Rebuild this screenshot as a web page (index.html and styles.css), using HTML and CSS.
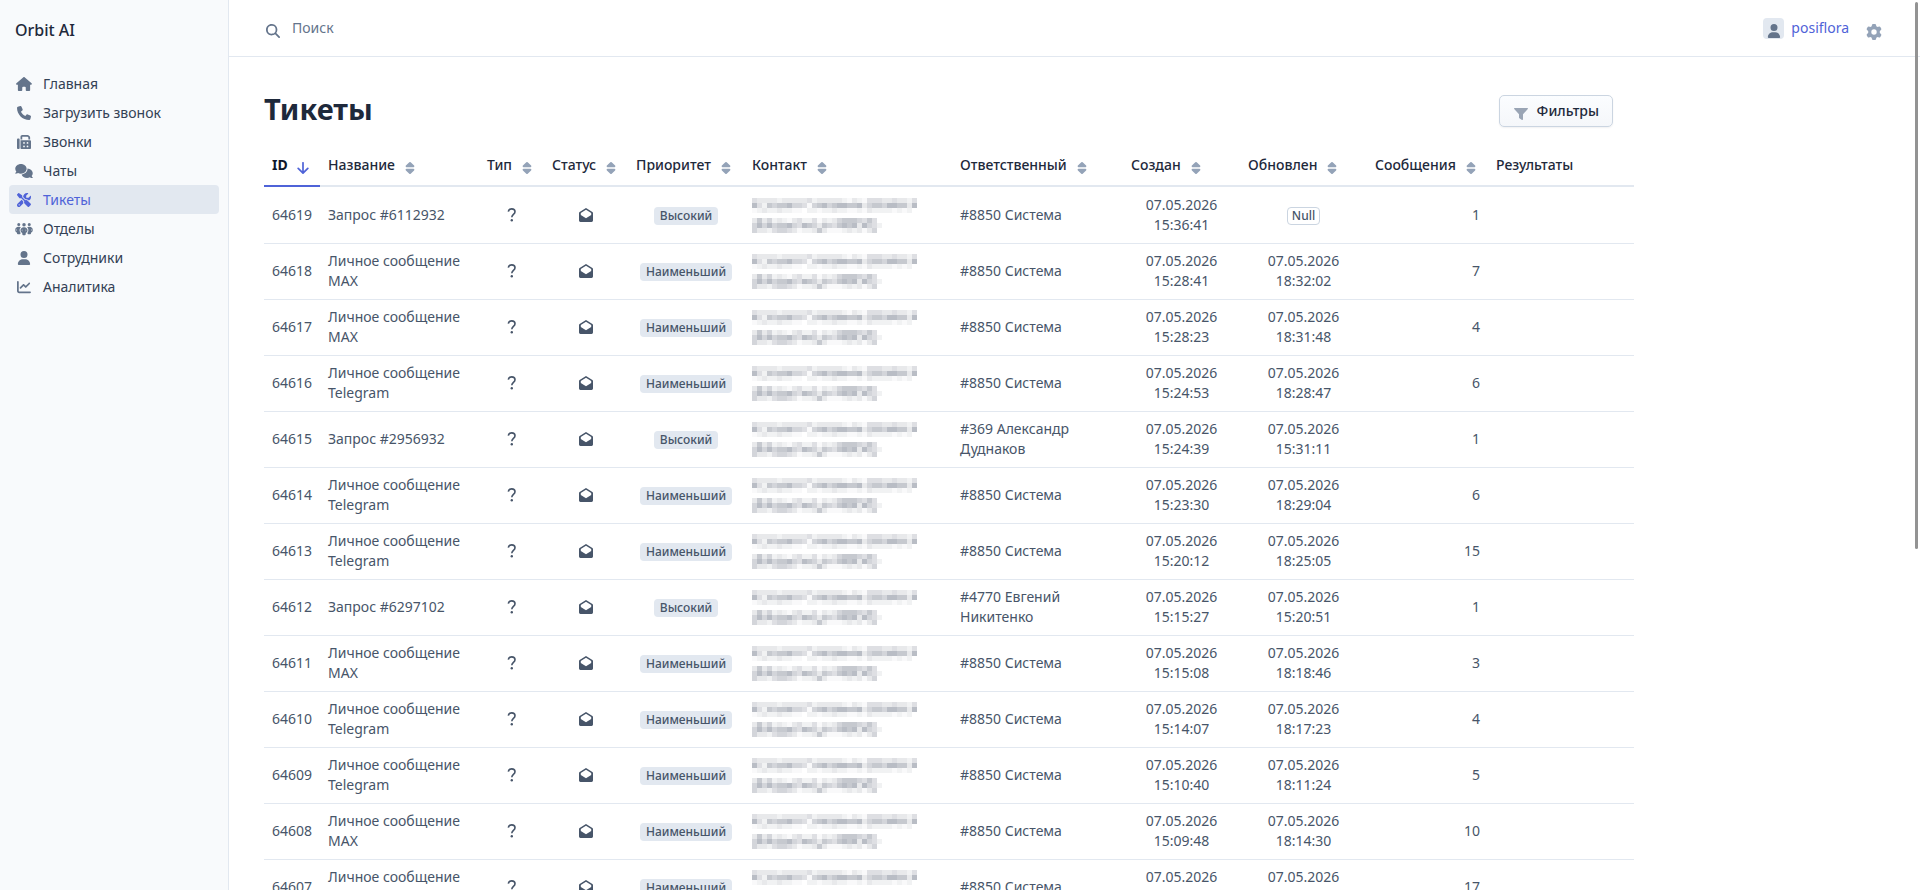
FILE: index.html
```html
<!DOCTYPE html>
<html lang="ru">
<head>
<meta charset="utf-8">
<title>Тикеты — Orbit AI</title>
<link rel="stylesheet" href="styles.css">
</head>
<body>
<svg class="sprite" aria-hidden="true">
  <symbol id="i-sort" viewBox="0 0 10 12"><path d="M5 0a1 1 0 0 1 .7.300l3.400 3.300c.6.6.2 1.600-.6 1.600H1.500c-.8 0-1.200-1-.6-1.600L4.300.300A1 1 0 0 1 5 0zM5 12a1 1 0 0 0 .7-.300l3.400-3.300c.6-.6.2-1.600-.6-1.600H1.500c-.8 0-1.200 1-.6 1.600l3.400 3.300a1 1 0 0 0 .7.300z"/></symbol>
  <symbol id="i-mail" viewBox="0 0 14 14"><path fill-rule="evenodd" d="M7 0 13.400 4Q14 4.400 14 5.100V12.600Q14 14 12.600 14H1.400Q0 14 0 12.600V5.100Q0 4.400.6 4zM7 1.700 1.800 5.100V6.900L7 10.200 12.200 6.900V5.100z"/></symbol>
  <symbol id="i-help" viewBox="0 0 10 14"><path fill="none" stroke="currentColor" stroke-width="1.600" d="M1.300 3.700C1.500 1.900 2.900.9 4.700.9c2 0 3.300 1.100 3.300 2.900 0 2.600-3.200 2.700-3.200 5.500"/><circle cx="4.800" cy="12.300" r="1.200"/></symbol>
  <symbol id="i-user" viewBox="0 0 448 512"><path d="M224 256A128 128 0 1 0 224 0a128 128 0 1 0 0 256zm-45.700 48C79.800 304 0 383.800 0 482.300C0 498.700 13.300 512 29.700 512H418.300c16.400 0 29.700-13.300 29.700-29.700C448 383.800 368.200 304 269.700 304H178.300z"/></symbol>
</svg>

<div class="layout">
  <aside class="sidebar">
    <a class="brand" href="#">Orbit AI</a>
    <nav class="menu" aria-label="Главное меню">
      <a href="#"><svg class="icon" viewBox="0 0 576 512"><path d="M575.800 255.500c0 18-15 32.100-32 32.100l-32 0 .7 160.200c0 2.700-.2 5.400-.5 8.100l0 16.200c0 22.100-17.900 40-40 40l-16 0c-1.100 0-2.200 0-3.300-.1c-1.400 .1-2.800 .1-4.200 .1L416 512l-24 0c-22.100 0-40-17.900-40-40l0-24 0-64c0-17.700-14.300-32-32-32l-64 0c-17.700 0-32 14.300-32 32l0 64 0 24c0 22.100-17.900 40-40 40l-24 0-31.900 0c-1.500 0-3-.1-4.500-.2c-1.200 .1-2.400 .2-3.600 .2l-16 0c-22.100 0-40-17.900-40-40l0-112c0-.9 0-1.900 .1-2.800l0-69.700-32 0c-18 0-32-14-32-32.100c0-9 3-17 10-24L266.400 8c7-7 15-8 22-8s15 2 21 7L564.800 231.500c8 7 12 15 11 24z"/></svg>Главная</a>
      <a href="#"><svg class="icon" viewBox="0 0 512 512"><path d="M164.900 24.600c-7.700-18.600-28-28.500-47.400-23.200l-88 24C12.100 30.200 0 46 0 64C0 311.400 200.600 512 448 512c18 0 33.800-12.100 38.600-29.500l24-88c5.300-19.400-4.600-39.700-23.200-47.400l-96-40c-16.300-6.800-35.200-2.100-46.300 11.600L304.700 368C234.300 334.700 177.300 277.700 144 207.300L193.300 167c13.700-11.200 18.400-30 11.600-46.300l-40-96z"/></svg>Загрузить звонок</a>
      <a href="#"><svg class="icon" viewBox="0 0 512 512"><path d="M128 64v96h64V64H386.700L416 93.300V160h64V93.300c0-17-6.700-33.300-18.700-45.300L432 18.700C420 6.700 403.700 0 386.700 0H192c-35.300 0-64 28.700-64 64zM0 160V480c0 17.700 14.300 32 32 32H64c17.700 0 32-14.300 32-32V160c0-17.700-14.300-32-32-32H32c-17.700 0-32 14.300-32 32zm480 32H128V480c0 17.700 14.300 32 32 32H480c17.700 0 32-14.300 32-32V224c0-17.700-14.300-32-32-32zM256 256a32 32 0 1 1 0 64 32 32 0 1 1 0-64zm96 32a32 32 0 1 1 64 0 32 32 0 1 1 -64 0zm32 96a32 32 0 1 1 0 64 32 32 0 1 1 0-64zM224 416a32 32 0 1 1 64 0 32 32 0 1 1 -64 0z" fill-rule="evenodd"/></svg>Звонки</a>
      <a href="#"><svg class="icon" viewBox="0 0 640 512"><path d="M208 352c114.900 0 208-78.800 208-176S322.900 0 208 0S0 78.800 0 176c0 38.600 14.700 74.300 39.600 103.400c-3.500 9.400-8.700 17.700-14.200 24.700c-4.800 6.200-9.700 11-13.300 14.300c-1.800 1.600-3.300 2.900-4.300 3.700c-.5 .4-.9 .7-1.100 .8l-.2 .2C1 327.200-1.400 334.400 .8 340.900S9.100 352 16 352c21.800 0 43.800-5.600 62.100-12.500c9.200-3.500 17.800-7.400 25.200-11.400C134.100 343.300 169.800 352 208 352zM448 176c0 112.300-99.100 196.900-216.500 207C255.800 457.400 336.400 512 432 512c38.200 0 73.900-8.700 104.700-23.900c7.500 4 16 7.900 25.200 11.400c18.300 6.900 40.300 12.500 62.100 12.500c6.900 0 13.100-4.500 15.200-11.100c2.100-6.600-.2-13.800-5.800-17.900l-.2-.2c-.2-.2-.6-.4-1.100-.8c-1-.8-2.500-2-4.300-3.700c-3.600-3.300-8.500-8.100-13.300-14.300c-5.500-7-10.700-15.400-14.200-24.700c24.900-29 39.600-64.700 39.600-103.400c0-92.800-84.900-168.900-192.600-175.500c.4 5.100 .6 10.300 .6 15.500z"/></svg>Чаты</a>
      <a class="active" href="#" aria-current="page"><svg class="icon" viewBox="0 0 512 512"><path d="M78.600 5C69.100-2.400 55.600-1.500 47 7L7 47c-8.500 8.500-9.400 22-2.100 31.600l80 104c4.500 5.900 11.600 9.400 19 9.400h54.100l109 109c-14.700 29-10 65.400 14.300 89.600l112 112c12.500 12.500 32.800 12.500 45.300 0l64-64c12.500-12.500 12.500-32.800 0-45.300l-112-112c-24.200-24.200-60.600-29-89.600-14.300l-109-109V104c0-7.500-3.500-14.500-9.400-19L78.600 5zM19.900 396.100C7.200 408.800 0 426.100 0 444.100C0 481.600 30.400 512 67.900 512c18 0 35.300-7.200 48-19.900L233.700 374.300c-7.800-20.900-9-43.600-3.600-65.100l-61.700-61.700L19.900 396.100zM512 144c0-10.500-1.100-20.700-3.200-30.500c-2.400-11.200-16.100-14.100-24.200-6l-63.900 63.900c-3 3-7.100 4.700-11.300 4.700H352c-8.800 0-16-7.200-16-16V102.600c0-4.200 1.700-8.300 4.700-11.300l63.900-63.900c8.100-8.100 5.200-21.800-6-24.200C388.700 1.100 378.500 0 368 0C288.500 0 224 64.500 224 144l0 .8 85.300 85.300c36-9.100 75.800 .5 104 28.700L429 274.500c49-23 83-72.800 83-130.500zM56 432a24 24 0 1 1 48 0 24 24 0 1 1 -48 0z"/></svg>Тикеты</a>
      <a href="#"><svg class="icon" viewBox="0 0 640 512"><path d="M72 88a56 56 0 1 1 112 0A56 56 0 1 1 72 88zM64 245.700C54 256.900 48 271.800 48 288s6 31.100 16 42.300V245.700zm144.400-49.300C178.700 222.700 160 261.200 160 304c0 34.300 12 65.800 32 90.500V416c0 17.700-14.300 32-32 32H96c-17.700 0-32-14.300-32-32V389.200C26.200 371.200 0 332.700 0 288c0-61.900 50.100-112 112-112h32c24 0 46.200 7.500 64.400 20.300zM448 416V394.500c20-24.700 32-56.200 32-90.500c0-42.800-18.700-81.300-48.400-107.700C449.800 183.500 472 176 496 176h32c61.900 0 112 50.100 112 112c0 44.700-26.200 83.200-64 101.200V416c0 17.700-14.300 32-32 32H480c-17.700 0-32-14.300-32-32zm8-328a56 56 0 1 1 112 0A56 56 0 1 1 456 88zM576 245.700v84.700c10-11.300 16-26.100 16-42.300s-6-31.100-16-42.300zM320 32a64 64 0 1 1 0 128 64 64 0 1 1 0-128zM240 304c0 16.200 6 31 16 42.300V261.700c-10 11.300-16 26.100-16 42.300zm144-42.300v84.700c10-11.300 16-26.100 16-42.300s-6-31.100-16-42.300zM448 304c0 44.700-26.200 83.200-64 101.200V448c0 17.700-14.300 32-32 32H288c-17.700 0-32-14.300-32-32V405.200c-37.800-18-64-56.500-64-101.200c0-61.900 50.100-112 112-112h32c61.900 0 112 50.100 112 112z"/></svg>Отделы</a>
      <a href="#"><svg class="icon"><use href="#i-user"/></svg>Сотрудники</a>
      <a href="#"><svg class="icon" viewBox="0 0 512 512"><path d="M64 64c0-17.700-14.300-32-32-32S0 46.300 0 64V400c0 44.200 35.800 80 80 80H480c17.700 0 32-14.300 32-32s-14.300-32-32-32H80c-8.800 0-16-7.200-16-16V64zm406.600 86.600c12.500-12.500 12.500-32.800 0-45.300s-32.800-12.500-45.300 0L320 210.700l-57.400-57.400c-12.500-12.500-32.800-12.500-45.300 0l-112 112c-12.500 12.500-12.500 32.800 0 45.300s32.800 12.500 45.300 0L240 221.300l57.400 57.400c12.500 12.500 32.800 12.500 45.300 0l128-128z"/></svg>Аналитика</a>
    </nav>
  </aside>

  <div class="page">
    <header class="topbar">
      <form class="search" role="search">
        <label for="query" aria-label="Поиск"><svg viewBox="0 0 512 512"><path d="M416 208c0 45.900-14.900 88.300-40 122.700L502.600 457.400c12.500 12.500 12.500 32.800 0 45.300s-32.800 12.500-45.300 0L330.700 376c-34.400 25.200-76.800 40-122.700 40C93.100 416 0 322.900 0 208S93.100 0 208 0S416 93.100 416 208zM208 352a144 144 0 1 0 0-288 144 144 0 1 0 0 288z"/></svg></label>
        <input id="query" type="search" placeholder="Поиск">
      </form>
      <a class="account" href="#"><span class="avatar"><svg><use href="#i-user"/></svg></span>posiflora</a>
      <button class="settings" type="button" aria-label="Настройки"><svg viewBox="0 0 16 16"><path fill-rule="evenodd" d="M6 .8Q6.200 0 7 0h2q.8 0 1 .8l.3 1.500 1.300.800 1.500-.5q.8-.2 1.200.5l.9 1.500q.4.700-.2 1.300L13.800 7v2l1.200 1.100q.6.600.2 1.300l-.9 1.500q-.4.700-1.200.5l-1.500-.5-1.300.800-.3 1.500q-.2.800-1 .8H7q-.8 0-1-.8l-.3-1.500-1.300-.8-1.500.5q-.8.2-1.200-.5l-.9-1.500q-.4-.7.2-1.300L2.200 9V7L1 5.900Q.4 5.300.8 4.600l.9-1.500q.4-.7 1.200-.5l1.500.5 1.300-.8zM8 5.300a2.700 2.700 0 1 0 0 5.400 2.700 2.700 0 0 0 0-5.400z"/></svg></button>
    </header>

    <main class="content">
      <div class="heading">
        <h1>Тикеты</h1>
        <button class="filters" type="button"><svg viewBox="0 0 14 12"><path d="M.6 0h12.800q.9.200.4 1L9 6.300v5q-.2.900-1 .6L5.400 10.300Q5 10 5 9.500V6.300L.2 1Q-.3.200.6 0z"/></svg>Фильтры</button>
      </div>
      <table class="tickets">
        <colgroup><col class="c-id"><col class="c-name"><col class="c-type"><col class="c-status"><col class="c-priority"><col class="c-contact"><col class="c-owner"><col class="c-created"><col class="c-updated"><col class="c-messages"><col class="c-results"></colgroup>
        <thead>
          <tr>
            <th class="sorted" aria-sort="descending"><a href="#">ID<svg viewBox="0 0 12 12"><path fill="none" stroke="currentColor" stroke-width="1.700" stroke-linecap="round" stroke-linejoin="round" d="M6 .8V11M1.200 6.400 6 11.200 10.800 6.400"/></svg></a></th>
            <th><a href="#">Название<svg><use href="#i-sort"/></svg></a></th>
            <th><a href="#">Тип<svg><use href="#i-sort"/></svg></a></th>
            <th><a href="#">Статус<svg><use href="#i-sort"/></svg></a></th>
            <th><a href="#">Приоритет<svg><use href="#i-sort"/></svg></a></th>
            <th><a href="#">Контакт<svg><use href="#i-sort"/></svg></a></th>
            <th><a href="#">Ответственный<svg><use href="#i-sort"/></svg></a></th>
            <th><a href="#">Создан<svg><use href="#i-sort"/></svg></a></th>
            <th><a href="#">Обновлен<svg><use href="#i-sort"/></svg></a></th>
            <th><a href="#">Сообщения<svg><use href="#i-sort"/></svg></a></th>
            <th>Результаты</th>
          </tr>
        </thead>
        <tbody id="rows"></tbody>
      </table>
    </main>
  </div>
</div>
<div class="scroll-thumb"></div>
<script src="tickets.js"></script>
</body>
</html>
```
FILE: styles.css
```css
* { box-sizing: border-box; }

body {
  margin: 0;
  height: 100vh;
  overflow: hidden;
  background: #fff;
  color: #475569;
  font: 14px/20px "Noto Sans", sans-serif;
}

a { color: inherit; text-decoration: none; }
button, input { font: inherit; }
svg { fill: currentColor; }
.sprite { position: absolute; width: 0; height: 0; }

.layout { display: flex; height: 100vh; }

.sidebar {
  flex: 0 0 229px;
  padding: 18px 9px;
  background: #f8fafc;
  border-right: 1px solid #e2e8f0;
}
.brand {
  display: block;
  padding-left: 6px;
  color: #1e293b;
  font-size: 16px;
  font-weight: 500;
  line-height: 24px;
}
.menu { display: flex; flex-direction: column; margin-top: 27px; color: #334155; }
.menu a {
  display: flex;
  align-items: center;
  gap: 10px;
  height: 29px;
  padding-left: 6px;
  border-radius: 4px;
}
.menu .icon { width: 18px; height: 14px; color: #64748b; }
.menu .active { background: #e2e8f0; color: #4f63d8; }
.menu .active .icon { color: #4f63d8; }

.page { flex: 1; min-width: 0; overflow: hidden; }

.topbar {
  display: flex;
  align-items: center;
  height: 57px;
  padding: 0 38px 0 37px;
  border-bottom: 1px solid #e2e8f0;
}
.search { display: flex; flex: 1; align-items: center; gap: 12px; }
.search label { padding-top: 6px; color: #64748b; line-height: 0; }
.search label svg { width: 14px; height: 14px; }
.search input {
  flex: 1;
  padding: 0;
  border: 0;
  outline: 0;
  background: none;
  color: #334155;
}
.search input::placeholder { color: #64748b; opacity: 1; }
.account { display: flex; align-items: center; gap: 7px; color: #4f63d8; }
.avatar {
  display: flex;
  align-items: flex-end;
  justify-content: center;
  width: 21px;
  height: 21px;
  padding-bottom: 1px;
  border-radius: 4px;
  background: #e2e8f0;
  color: #64748b;
}
.avatar svg { width: 14px; height: 14px; }
.settings {
  margin-left: 17px;
  padding: 8px 0 0;
  border: 0;
  background: none;
  color: #94a3b8;
  line-height: 0;
}
.settings svg { width: 16px; height: 16px; }

.content { max-width: 1405px; padding-left: 35px; }

.heading {
  display: flex;
  align-items: flex-end;
  justify-content: space-between;
  padding: 33px 21px 18px 0;
}
h1 {
  margin: 0;
  color: #1e293b;
  font-size: 29px;
  font-weight: 700;
  line-height: 37px;
}
.filters {
  display: flex;
  align-items: center;
  gap: 9px;
  height: 32px;
  padding: 0 13px 0 14px;
  border: 1px solid #cbd5e1;
  border-radius: 5px;
  background: linear-gradient(#fbfdff, #f5f7fa);
  box-shadow: 0 1px 2px rgb(15 23 42 / 6%);
  color: #1e293b;
  font-weight: 500;
}
.filters svg { width: 14px; height: 12px; margin-top: 5px; color: #9aa5b5; }

.tickets { width: 100%; table-layout: fixed; border-collapse: separate; border-spacing: 0; }
.c-id { width: 56px; }
.c-name { width: 159px; }
.c-type { width: 65px; }
.c-status { width: 84px; }
.c-priority { width: 116px; }
.c-contact { width: 208px; }
.c-owner { width: 171px; }
.c-created { width: 117px; }
.c-updated { width: 127px; }
.c-messages { width: 121px; }
.c-results { width: 146px; }

th {
  padding: 10px 8px;
  border-bottom: 2px solid #e2e8f0;
  color: #1e293b;
  font-weight: 500;
  text-align: left;
  white-space: nowrap;
}
th a { display: flex; align-items: center; gap: 10px; }
th svg { width: 10px; height: 12px; margin-top: 5px; color: #94a3b8; }
th.sorted { border-color: #4f63d8; color: #0f172a; font-weight: 700; }
th.sorted a { gap: 9px; }
th.sorted svg { width: 12px; color: #4f63d8; }

td { height: 56px; padding: 7px 8px 8px; border-top: 1px solid #e2e8f0; }
tr:first-child td { border-color: transparent; }
td.center { text-align: center; }
td.number { text-align: right; }
td svg { display: block; margin: 0 auto; }
.help { width: 10px; height: 14px; }
.mail { width: 14px; height: 14px; }
.masked { width: 170px; height: 35px; margin: 0; }

.badge {
  display: inline-block;
  padding: 0 6px;
  border-radius: 4px;
  background: #e2e8f0;
  font-size: 12px;
  font-weight: 500;
  line-height: 18px;
}
.badge.empty { padding: 0 4px; border: 1px solid #cbd5e1; background: #fff; line-height: 16px; }

.scroll-thumb {
  position: fixed;
  top: 2px;
  right: 2px;
  width: 3px;
  height: 61.5vh;
  border-radius: 2px;
  background: #939393;
}
```
FILE: tickets.js
```js
const SYSTEM = '#8850 Система';
const tickets = [
  [64619, 'Запрос #6112932', 'Высокий', SYSTEM, '15:36:41', null, 1],
  [64618, 'Личное сообщение MAX', 'Наименьший', SYSTEM, '15:28:41', '18:32:02', 7],
  [64617, 'Личное сообщение MAX', 'Наименьший', SYSTEM, '15:28:23', '18:31:48', 4],
  [64616, 'Личное сообщение Telegram', 'Наименьший', SYSTEM, '15:24:53', '18:28:47', 6],
  [64615, 'Запрос #2956932', 'Высокий', '#369 Александр Дуднаков', '15:24:39', '15:31:11', 1],
  [64614, 'Личное сообщение Telegram', 'Наименьший', SYSTEM, '15:23:30', '18:29:04', 6],
  [64613, 'Личное сообщение Telegram', 'Наименьший', SYSTEM, '15:20:12', '18:25:05', 15],
  [64612, 'Запрос #6297102', 'Высокий', '#4770 Евгений Никитенко', '15:15:27', '15:20:51', 1],
  [64611, 'Личное сообщение MAX', 'Наименьший', SYSTEM, '15:15:08', '18:18:46', 3],
  [64610, 'Личное сообщение Telegram', 'Наименьший', SYSTEM, '15:14:07', '18:17:23', 4],
  [64609, 'Личное сообщение Telegram', 'Наименьший', SYSTEM, '15:10:40', '18:11:24', 5],
  [64608, 'Личное сообщение MAX', 'Наименьший', SYSTEM, '15:09:48', '18:14:30', 10],
  [64607, 'Личное сообщение MAX', 'Наименьший', SYSTEM, '15:08:31', '18:12:09', 17],
];

// Masked contact: each letter is one 5px cell, from dark (a) to light (g).
const shades = { a: '#b9bdc5', b: '#c6c9cf', c: '#d3d5da', d: '#dedfe3', e: '#e8e9eb', f: '#f1f2f3', g: '#f9f9fa' };
const mask = [
  'deeeefeeeeedfeeeeefgefgdddeedeefd',
  'adfbcbbaccdgcbacbaabbaecbbcaabbea',
  'gfeffeffgg ffgffeffggfgeffffgfgf ',
  '',
  'ebecfefgedffdgefecbbbcdbd',
  'cacacbbacdabcebcdbabaeacdf',
  'ceefdccdegffebegggfefegec',
];
const cells = mask.flatMap((line, y) => [...line].map((k, x) =>
  k === ' ' ? '' : `<rect x="${x * 5}" y="${y * 5}" width="5" height="5" fill="${shades[k]}"/>`)).join('');
const masked = `<svg class="masked" viewBox="0 0 170 35" shape-rendering="crispEdges" role="img" aria-label="Контакт скрыт">${cells}</svg>`;

const date = time => time ? `07.05.2026<br>${time}` : '<span class="badge empty">Null</span>';

document.getElementById('rows').innerHTML = tickets.map(([id, name, priority, owner, created, updated, count]) => `
  <tr>
    <td>${id}</td>
    <td>${name}</td>
    <td class="center"><svg class="help"><use href="#i-help"/></svg></td>
    <td class="center"><svg class="mail"><use href="#i-mail"/></svg></td>
    <td class="center"><span class="badge">${priority}</span></td>
    <td>${masked}</td>
    <td>${owner}</td>
    <td class="center">${date(created)}</td>
    <td class="center">${date(updated)}</td>
    <td class="number">${count}</td>
    <td></td>
  </tr>`).join('');
```
